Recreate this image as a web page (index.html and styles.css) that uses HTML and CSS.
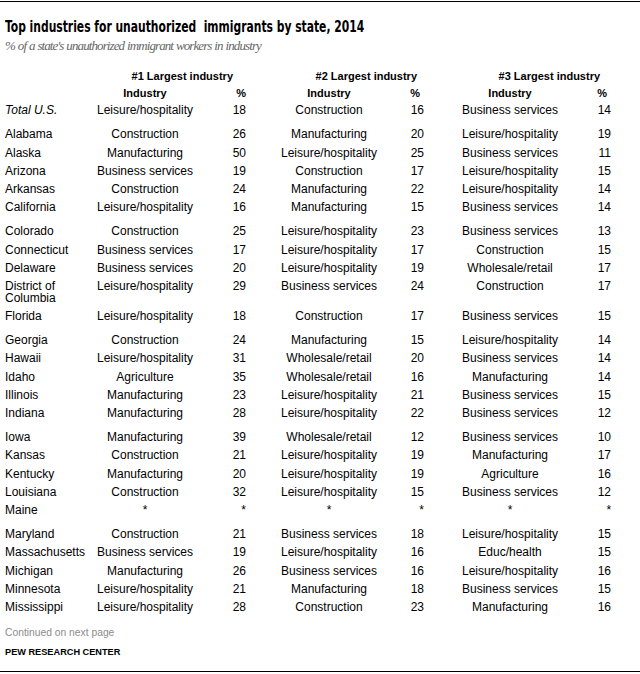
FILE: index.html
```html
<!DOCTYPE html>
<html lang="en">
<head>
  <meta charset="UTF-8">
  <title>Top industries for unauthorized immigrants by state, 2014</title>
  <link rel="stylesheet" href="styles.css">
</head>
<body>
  <div class="chart">
    <h1 class="title"><span>Top industries for unauthorized&nbsp; immigrants by state, 2014</span></h1>
    <p class="subtitle">% of a state's unauthorized immigrant workers in industry</p>

    <table class="industries">
      <colgroup>
        <col class="c-state">
        <col class="c-ind1">
        <col class="c-pct1">
        <col class="c-ind2">
        <col class="c-pct2">
        <col class="c-ind3">
        <col class="c-pct3">
      </colgroup>
      <thead>
        <tr class="head">
          <th></th>
          <th colspan="2" class="grp grp-1">#1 Largest industry</th>
          <th colspan="2" class="grp grp-2">#2 Largest industry</th>
          <th colspan="2" class="grp grp-3">#3 Largest industry</th>
        </tr>
        <tr class="head">
          <th></th>
          <th>Industry</th>
          <th class="pct pct-1">%</th>
          <th>Industry</th>
          <th class="pct pct-2">%</th>
          <th>Industry</th>
          <th class="pct pct-3">%</th>
        </tr>
      </thead>
      <tbody>
        <tr class="total">
          <td class="state">Total U.S.</td>
          <td>Leisure/hospitality</td><td class="pct">18</td>
          <td>Construction</td><td class="pct">16</td>
          <td>Business services</td><td class="pct">14</td>
        </tr>

        <!-- A - C -->
        <tr class="first">
          <td class="state">Alabama</td>
          <td>Construction</td><td class="pct">26</td>
          <td>Manufacturing</td><td class="pct">20</td>
          <td>Leisure/hospitality</td><td class="pct">19</td>
        </tr>
        <tr>
          <td class="state">Alaska</td>
          <td>Manufacturing</td><td class="pct">50</td>
          <td>Leisure/hospitality</td><td class="pct">25</td>
          <td>Business services</td><td class="pct">11</td>
        </tr>
        <tr>
          <td class="state">Arizona</td>
          <td>Business services</td><td class="pct">19</td>
          <td>Construction</td><td class="pct">17</td>
          <td>Leisure/hospitality</td><td class="pct">15</td>
        </tr>
        <tr>
          <td class="state">Arkansas</td>
          <td>Construction</td><td class="pct">24</td>
          <td>Manufacturing</td><td class="pct">22</td>
          <td>Leisure/hospitality</td><td class="pct">14</td>
        </tr>
        <tr>
          <td class="state">California</td>
          <td>Leisure/hospitality</td><td class="pct">16</td>
          <td>Manufacturing</td><td class="pct">15</td>
          <td>Business services</td><td class="pct">14</td>
        </tr>

        <tr class="first">
          <td class="state">Colorado</td>
          <td>Construction</td><td class="pct">25</td>
          <td>Leisure/hospitality</td><td class="pct">23</td>
          <td>Business services</td><td class="pct">13</td>
        </tr>
        <tr>
          <td class="state">Connecticut</td>
          <td>Business services</td><td class="pct">17</td>
          <td>Leisure/hospitality</td><td class="pct">17</td>
          <td>Construction</td><td class="pct">15</td>
        </tr>
        <tr>
          <td class="state">Delaware</td>
          <td>Business services</td><td class="pct">20</td>
          <td>Leisure/hospitality</td><td class="pct">19</td>
          <td>Wholesale/retail</td><td class="pct">17</td>
        </tr>
        <tr>
          <td class="state">District of Columbia</td>
          <td>Leisure/hospitality</td><td class="pct">29</td>
          <td>Business services</td><td class="pct">24</td>
          <td>Construction</td><td class="pct">17</td>
        </tr>
        <tr>
          <td class="state">Florida</td>
          <td>Leisure/hospitality</td><td class="pct">18</td>
          <td>Construction</td><td class="pct">17</td>
          <td>Business services</td><td class="pct">15</td>
        </tr>

        <tr class="first">
          <td class="state">Georgia</td>
          <td>Construction</td><td class="pct">24</td>
          <td>Manufacturing</td><td class="pct">15</td>
          <td>Leisure/hospitality</td><td class="pct">14</td>
        </tr>
        <tr>
          <td class="state">Hawaii</td>
          <td>Leisure/hospitality</td><td class="pct">31</td>
          <td>Wholesale/retail</td><td class="pct">20</td>
          <td>Business services</td><td class="pct">14</td>
        </tr>
        <tr>
          <td class="state">Idaho</td>
          <td>Agriculture</td><td class="pct">35</td>
          <td>Wholesale/retail</td><td class="pct">16</td>
          <td>Manufacturing</td><td class="pct">14</td>
        </tr>
        <tr>
          <td class="state">Illinois</td>
          <td>Manufacturing</td><td class="pct">23</td>
          <td>Leisure/hospitality</td><td class="pct">21</td>
          <td>Business services</td><td class="pct">15</td>
        </tr>
        <tr>
          <td class="state">Indiana</td>
          <td>Manufacturing</td><td class="pct">28</td>
          <td>Leisure/hospitality</td><td class="pct">22</td>
          <td>Business services</td><td class="pct">12</td>
        </tr>

        <tr class="first">
          <td class="state">Iowa</td>
          <td>Manufacturing</td><td class="pct">39</td>
          <td>Wholesale/retail</td><td class="pct">12</td>
          <td>Business services</td><td class="pct">10</td>
        </tr>
        <tr>
          <td class="state">Kansas</td>
          <td>Construction</td><td class="pct">21</td>
          <td>Leisure/hospitality</td><td class="pct">19</td>
          <td>Manufacturing</td><td class="pct">17</td>
        </tr>
        <tr>
          <td class="state">Kentucky</td>
          <td>Manufacturing</td><td class="pct">20</td>
          <td>Leisure/hospitality</td><td class="pct">19</td>
          <td>Agriculture</td><td class="pct">16</td>
        </tr>
        <tr>
          <td class="state">Louisiana</td>
          <td>Construction</td><td class="pct">32</td>
          <td>Leisure/hospitality</td><td class="pct">15</td>
          <td>Business services</td><td class="pct">12</td>
        </tr>
        <tr>
          <td class="state">Maine</td>
          <td>*</td><td class="pct">*</td>
          <td>*</td><td class="pct">*</td>
          <td>*</td><td class="pct">*</td>
        </tr>

        <tr class="first">
          <td class="state">Maryland</td>
          <td>Construction</td><td class="pct">21</td>
          <td>Business services</td><td class="pct">18</td>
          <td>Leisure/hospitality</td><td class="pct">15</td>
        </tr>
        <tr>
          <td class="state">Massachusetts</td>
          <td>Business services</td><td class="pct">19</td>
          <td>Leisure/hospitality</td><td class="pct">16</td>
          <td>Educ/health</td><td class="pct">15</td>
        </tr>
        <tr>
          <td class="state">Michigan</td>
          <td>Manufacturing</td><td class="pct">26</td>
          <td>Business services</td><td class="pct">16</td>
          <td>Leisure/hospitality</td><td class="pct">16</td>
        </tr>
        <tr>
          <td class="state">Minnesota</td>
          <td>Leisure/hospitality</td><td class="pct">21</td>
          <td>Manufacturing</td><td class="pct">18</td>
          <td>Business services</td><td class="pct">15</td>
        </tr>
        <tr>
          <td class="state">Mississippi</td>
          <td>Leisure/hospitality</td><td class="pct">28</td>
          <td>Construction</td><td class="pct">23</td>
          <td>Manufacturing</td><td class="pct">16</td>
        </tr>
      </tbody>
    </table>

    <div class="note">Continued on next page</div>
    <div class="source">PEW RESEARCH CENTER</div>
  </div>
</body>
</html>
```

FILE: styles.css
```css
body {
  margin: 0;
  background: #fff;
  color: #000;
  font-family: "Liberation Sans", Arial, sans-serif;
}

.chart {
  margin-top: 1px;
  height: 669px;
  border-top: 1px solid #000;
  border-bottom: 1px solid #000;
  padding: 0 0 0 5px;
  box-sizing: content-box;
}

/* condensed headline: no narrow face installed, so squeeze it */
.title {
  margin: 15px 0 0;
  font-family: "DejaVu Sans Condensed", "DejaVu Sans", sans-serif;
  font-weight: bold;
  font-size: 16.5px;
  line-height: 20px;
  white-space: nowrap;
}

.title span {
  display: inline-block;
  transform: scaleX(0.725);
  transform-origin: left center;
}

.subtitle {
  margin: 1px 0 0;
  font-family: "Liberation Serif", serif;
  font-style: italic;
  font-size: 13px;
  line-height: 16px;
  color: #666;
  letter-spacing: -0.9px;
  word-spacing: 0.5px;
}

.industries {
  margin-top: 14px;
  border-collapse: collapse;
  table-layout: fixed;
  width: 608px;
  font-size: 12px;
  line-height: 11.6px;
}

.c-state { width: 85px; }
.c-ind1 { width: 110px; }
.c-pct1 { width: 48px; }
.c-ind2 { width: 162px; }
.c-pct2 { width: 16px; }
.c-ind3 { width: 168px; }
.c-pct3 { width: 19px; }

.industries th,
.industries td {
  padding: 3.35px 0;
  text-align: center;
  vertical-align: top;
}

.industries th {
  font-size: 11px;
  font-weight: bold;
  padding: 2.7px 0;
}

.industries .pct {
  text-align: right;
  padding-right: 2px;
}

.industries th.pct-2,
.industries th.pct-3 {
  padding-right: 6px;
}

.industries th.grp {
  text-align: right;
}

.grp-1 { padding-right: 15px !important; }
.grp-2 { padding-right: 9px !important; }
.grp-3 { padding-right: 13px !important; }

.industries td.state {
  text-align: left;
}

.total .state {
  font-style: italic;
}

.industries tr.first td {
  padding-top: 9px;
}

.note {
  margin-top: 10px;
  font-size: 10.3px;
  line-height: 12px;
  color: #8c8c8c;
}

.source {
  margin-top: 7px;
  font-size: 9.2px;
  line-height: 12px;
  font-weight: bold;
}
```
